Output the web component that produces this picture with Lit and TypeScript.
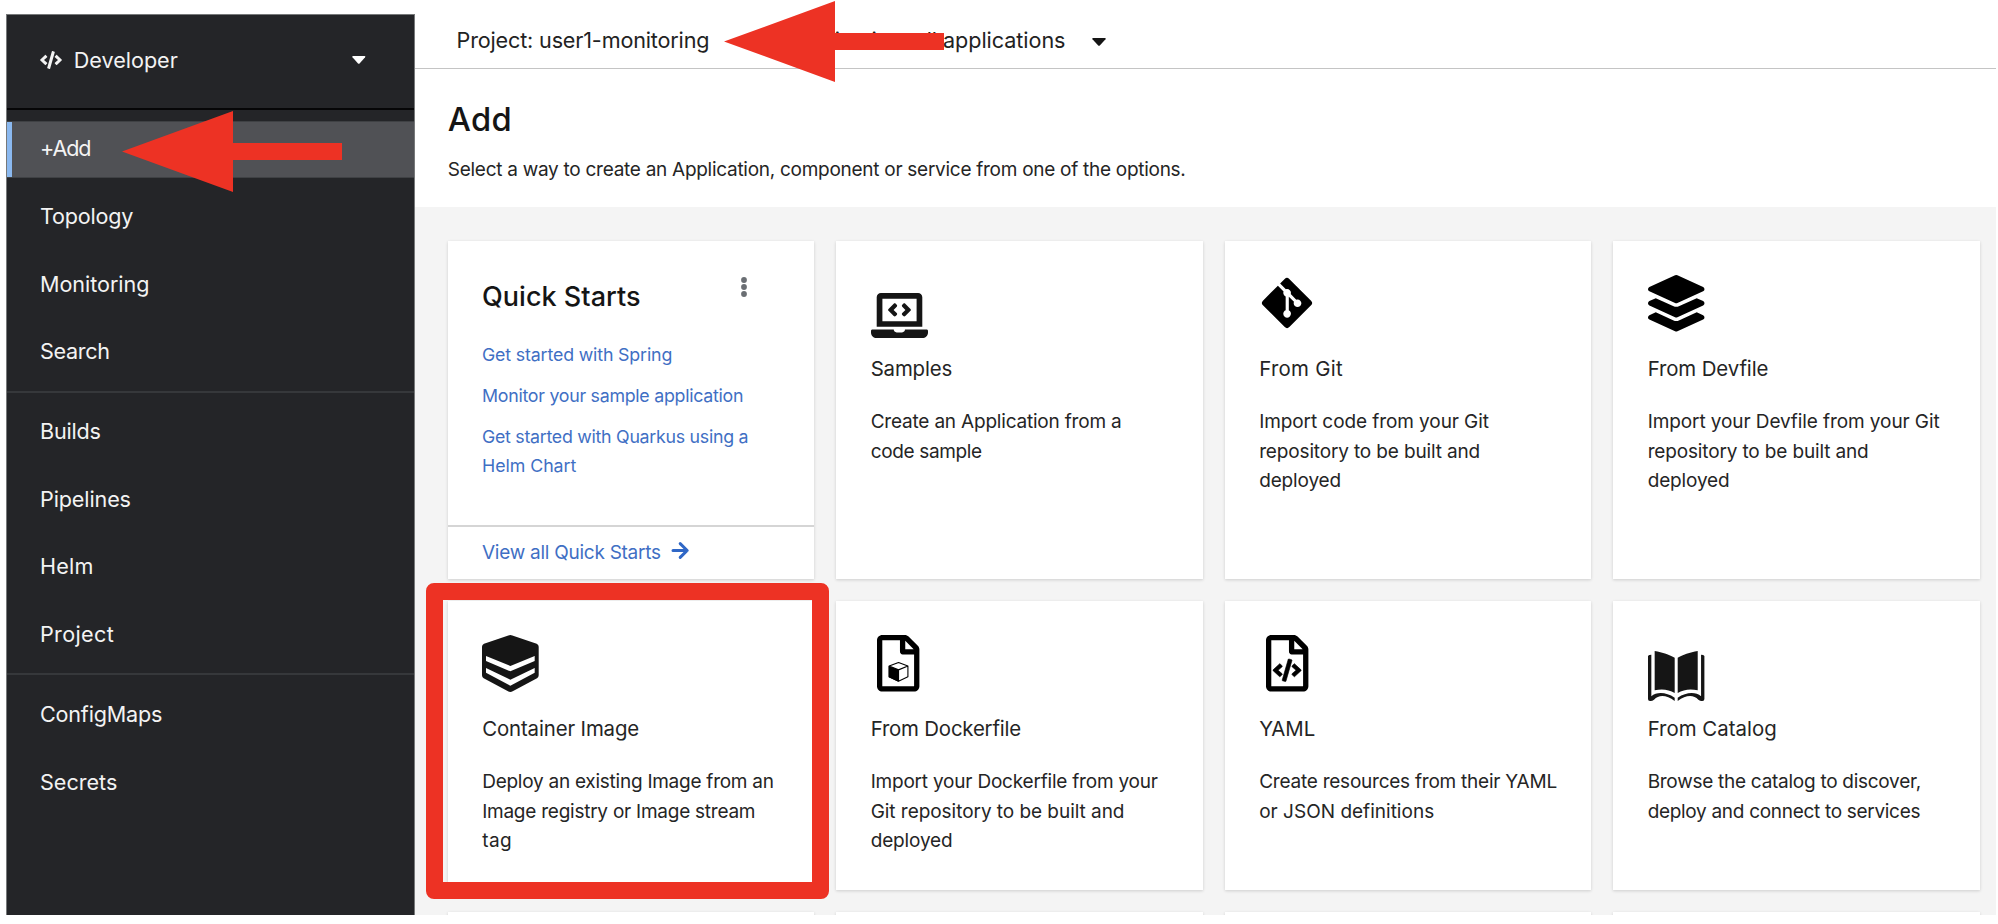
import { LitElement, html, svg, css, nothing } from "lit";
import { customElement, property } from "lit/decorators.js";
import { classMap } from "lit/directives/class-map.js";

type Line = [text: string, width: number];
interface Tile { icon: string; title: Line; lines: Line[]; }

const FONT = '"Inter"';
const ruler = document.createElement("canvas").getContext("2d")!;

/** Letter spacing that makes a line of text fill the given width. */
function tracking([text, width]: Line, size: number, weight = 400): number {
  ruler.font = `${weight} ${size}px ${FONT}`;
  return (width - ruler.measureText(text).width) / (text.length - 1);
}
function fit(line: Line, size: number, weight = 400) {
  return html`<span style="letter-spacing:${tracking(line, size, weight).toFixed(3)}px">${line[0]}</span>`;
}

const CODE = "M278.9 511.5l-61-17.7c-6.4-1.8-10-8.5-8.2-14.9L346.2 8.7c1.8-6.4 8.5-10 14.9-8.2l61 17.7c6.4 1.8 10 8.5 8.2 14.9L293.8 503.3c-1.9 6.4-8.5 10.1-14.9 8.2zm-114-112.2l43.5-46.4c4.6-4.9 4.3-12.7-.8-17.2L117 256l90.6-79.7c5.1-4.5 5.5-12.3.8-17.2l-43.5-46.4c-4.5-4.8-12.1-5.1-17-.5L3.8 247.2c-5.1 4.7-5.1 12.8 0 17.5l144.1 135.1c4.9 4.6 12.5 4.4 17-.5zm327.2.6l144.1-135.1c5.1-4.7 5.1-12.8 0-17.5L492.1 112.1c-4.8-4.5-12.4-4.3-17 .5L431.6 159c-4.6 4.9-4.3 12.7.8 17.2L523 256l-90.6 79.7c-5.1 4.5-5.5 12.3-.8 17.2l43.5 46.4c4.5 4.9 12.1 5.1 17 .6z";
const FILE = "M369.9 97.9L286 14C277 5 264.8-.1 252.1-.1H48C21.5 0 0 21.5 0 48v416c0 26.5 21.5 48 48 48h288c26.5 0 48-21.5 48-48V131.9c0-12.7-5.1-25-14.1-34zM332.1 128H256V51.9l76.1 76.1zM48 464V48h160v104c0 13.3 10.7 24 24 24h104v288H48z";
const BOOK = "M42 32C65 36 88 44 102 52V158C85 148 65 144 42 150ZM22 47Q24 43 32 43V168C48 154 76 155 102 172V182C78 164 55 162 40 178Q34 183 28 182Q22 182 22 176Z";

const ICONS: Record<string, { box: string; body: unknown }> = {
  laptop: { box: "0 0 640 512", body: svg`<path d="M255.03 261.65c6.25 6.25 16.38 6.25 22.63 0l11.31-11.31c6.25-6.25 6.25-16.38 0-22.63L253.25 192l35.71-35.72c6.25-6.25 6.25-16.38 0-22.63l-11.31-11.31c-6.25-6.25-16.38-6.25-22.63 0l-58.34 58.34c-6.25 6.25-6.25 16.38 0 22.63l58.35 58.34zm96.01-11.3l11.31 11.31c6.25 6.25 16.38 6.25 22.63 0l58.34-58.34c6.25-6.25 6.25-16.38 0-22.63l-58.34-58.34c-6.25-6.25-16.38-6.25-22.63 0l-11.31 11.31c-6.25 6.25-6.25 16.38 0 22.63L386.75 192l-35.71 35.72c-6.25 6.25-6.25 16.38 0 22.63zM624 416H381.54c-.74 19.81-14.71 32-32.74 32H288c-18.69 0-33.02-17.47-32.77-32H16c-8.8 0-16 7.2-16 16v16c0 35.2 28.8 64 64 64h512c35.2 0 64-28.8 64-64v-16c0-8.8-7.2-16-16-16zM576 48c0-26.4-21.6-48-48-48H112C85.6 0 64 21.6 64 48v336h512V48zm-64 272H128V64h384v256z"/>` },
  git: { box: "0 32 448 448", body: svg`<path d="M439.55 236.05L244 40.45a28.87 28.87 0 0 0-40.81 0l-40.66 40.63 51.52 51.52c27.06-9.14 52.68 16.77 43.39 43.68l49.66 49.66c34.23-11.8 61.18 31 35.47 56.69-26.49 26.49-70.21-2.87-56-37.34L240.22 199v121.85c25.3 12.54 22.26 41.85 9.08 55a34.34 34.34 0 0 1-48.55 0c-17.57-17.6-11.07-46.91 11.25-56v-123c-20.8-8.51-24.6-30.74-18.64-45L142.57 101 8.45 235.14a28.86 28.86 0 0 0 0 40.81l195.61 195.6a28.86 28.86 0 0 0 40.8 0l194.69-194.69a28.86 28.86 0 0 0 0-40.81z"/>` },
  layers: { box: "0 0 512 512", body: svg`<path d="M12.41 148.02l232.94 105.67c6.8 3.09 14.49 3.09 21.29 0l232.94-105.67c16.55-7.51 16.55-32.52 0-40.03L266.65 2.31a25.607 25.607 0 0 0-21.29 0L12.41 107.98c-16.55 7.51-16.55 32.53 0 40.04zm487.18 88.28l-58.09-26.33-161.64 73.27c-7.56 3.43-15.59 5.17-23.86 5.17s-16.29-1.74-23.86-5.17L70.51 209.97l-58.1 26.33c-16.55 7.5-16.55 32.5 0 40l232.94 105.59c6.8 3.08 14.49 3.08 21.29 0L499.59 276.3c16.55-7.5 16.55-32.5 0-40zm0 127.8l-57.87-26.23-161.86 73.37c-7.56 3.43-15.59 5.17-23.86 5.17s-16.29-1.74-23.86-5.17L70.29 337.87 12.41 364.1c-16.55 7.5-16.55 32.5 0 40l232.94 105.59c6.8 3.08 14.49 3.08 21.29 0L499.59 404.1c16.55-7.5 16.55-32.5 0-40z"/>` },
  container: { box: "18 18 170 171", body: svg`<path fill-rule="evenodd" d="M97 19.5Q103 17 109 19.5L182 44Q188 47 188 53V139Q188 145 183 148L110 187Q103 191 96 187L23 148Q18 145 18 139V53Q18 47 24 44ZM30 81V96L103 127L176 96V81L103 111ZM30 117V131L103 170L176 131V117L103 152Z"/>` },
  docker: { box: "0 0 384 512", body: svg`<path d=${FILE}/><path d="M106 280L195 316V424L106 382Z"/><path d="M195 249L280 281V379L195 419L110 379V281ZM195 316L280 281M195 316L110 281M195 316V419" fill="none" stroke="currentColor" stroke-width="10" stroke-linejoin="round"/>` },
  yaml: { box: "0 0 384 512", body: svg`<path d=${FILE}/><path transform="translate(63 217) scale(.4)" d=${CODE} stroke="currentColor" stroke-width="14"/>` },
  book: { box: "22 32 169 150", body: svg`<path d=${BOOK}/><path transform="translate(213 0) scale(-1 1)" d=${BOOK}/>` },
  code: { box: "0 0 640 512", body: svg`<path d=${CODE}/>` },
  caret: { box: "0 0 14 8", body: svg`<path d="M1 0H13Q14.4 .2 13.5 1.2L7.8 7.4Q7 8.2 6.2 7.4L.5 1.2Q-.4 .2 1 0Z"/>` },
  kebab: { box: "0 0 6 20", body: svg`<circle cx="3" cy="3" r="2.9"/><circle cx="3" cy="10" r="2.9"/><circle cx="3" cy="17" r="2.9"/>` },
  arrow: { box: "0 0 17 17", body: svg`<path d="M1 8.5H15M8.2 1.6L15.2 8.5L8.2 15.4" fill="none" stroke="currentColor" stroke-width="3" stroke-linecap="round" stroke-linejoin="round"/>` },
};

function icon(name: string) {
  const { box, body } = ICONS[name];
  return html`<svg class="icon ${name}" viewBox=${box} preserveAspectRatio="none" fill="currentColor" aria-hidden="true">${body}</svg>`;
}

const NAV: Line[][] = [
  [["+Add", 51.5], ["Topology", 93.5], ["Monitoring", 109.5], ["Search", 70]],
  [["Builds", 61], ["Pipelines", 91], ["Helm", 53.5], ["Project", 73.7]],
  [["ConfigMaps", 122.3], ["Secrets", 77.3]],
];

const LINKS: Line[][] = [
  [["Get started with Spring", 190.3]],
  [["Monitor your sample application", 261.5]],
  [["Get started with Quarkus using a", 266.5], ["Helm Chart", 94.3]],
];

const TILES: Tile[] = [
  { icon: "laptop", title: ["Samples", 81.5], lines: [["Create an Application from a", 251], ["code sample", 111.5]] },
  { icon: "git", title: ["From Git", 83.5], lines: [["Import code from your Git", 229.8], ["repository to be built and", 221], ["deployed", 82]] },
  { icon: "layers", title: ["From Devfile", 120.8], lines: [["Import your Devfile from your Git", 292], ["repository to be built and", 221], ["deployed", 82]] },
  { icon: "container", title: ["Container Image", 157], lines: [["Deploy an existing Image from an", 291.8], ["Image registry or Image stream", 273.3], ["tag", 29.5]] },
  { icon: "docker", title: ["From Dockerfile", 150.5], lines: [["Import your Dockerfile from your", 287.3], ["Git repository to be built and", 253.8], ["deployed", 82]] },
  { icon: "yaml", title: ["YAML", 56], lines: [["Create resources from their YAML", 298], ["or JSON definitions", 175]] },
  { icon: "book", title: ["From Catalog", 129], lines: [["Browse the catalog to discover,", 273.5], ["deploy and connect to services", 272.8]] },
];

const shared = css`
  * { box-sizing: border-box; }
  .icon { display: block; flex: none; overflow: visible; }
`;

@customElement("dev-nav")
export class DevNav extends LitElement {
  static styles = [shared, css`
    :host { display: block; flex: none; width: 409px; background: #242528; color: #f3f3f3; font: 21.6px "Inter", sans-serif;
      border: 1px solid #77797a; border-bottom: 0; white-space: nowrap; }
    .switch { display: flex; align-items: center; height: 95px; padding: 0 48.5px 3px 33.3px; border-bottom: 2px solid #060607; line-height: 30px; }
    .switch .name { flex: 1; padding: 0 0 1px 11.5px; }
    .code { width: 22px; height: 18px; margin-bottom: 1px; }
    .caret { width: 13.6px; height: 8px; color: #fff; }
    .group { display: flex; flex-direction: column; gap: 10.5px; padding: 10.8px 0 10.4px; }
    .group + .group { border-top: 2px solid #36383b; }
    .item { height: 57px; line-height: 56px; padding-left: 33px; }
    .item.active { background: #505155; border: solid #3f4144; border-width: 1px 0; line-height: 53px; box-shadow: inset 5px 0 #8bb9f0; }
  `];
  render() {
    return html`
      <div class="switch">${icon("code")}<span class="name">${fit(["Developer", 104], 21.6)}</span>${icon("caret")}</div>
      ${NAV.map((g, i) => html`<div class="group">${g.map((l, j) => html`<div class=${classMap({ item: true, active: i + j === 0 })}>${fit(l, 21.6)}</div>`)}</div>`)}`;
  }
}

const cardStyles = css`
  :host { display: block; background: #fff; box-shadow: 0 1px 3px rgba(3, 3, 3, .16); color: #252525;
    font: 19px/29.6px "Inter", sans-serif; white-space: nowrap; }
`;

@customElement("quick-starts")
export class QuickStarts extends LitElement {
  static styles = [shared, cardStyles, css`
    :host { display: flex; flex-direction: column; }
    .head { display: flex; justify-content: space-between; padding: 36.8px 67.3px 0 34px; }
    .title { font-size: 27px; line-height: 37px; font-weight: 500; color: #151515; }
    .kebab { width: 6px; height: 20px; margin-top: -.5px; color: #6a6e73; }
    .links { flex: 1; display: flex; flex-direction: column; gap: 11.1px; padding: 25.4px 0 0 34px; color: #3f6fc4; font-size: 17.8px; }
    .line { display: block; }
    .foot { display: flex; gap: 11.5px; height: 54px; padding: 10.8px 0 0 34px; border-top: 2px solid #d5d5d5; color: #3f6fc4; line-height: 30px; }
    .arrow { width: 17px; height: 17px; margin-top: 4.3px; color: #2f67c6; }
  `];
  render() {
    return html`
      <div class="head"><div class="title">${fit(["Quick Starts", 158.5], 27, 500)}</div>${icon("kebab")}</div>
      <div class="links">${LINKS.map(l => html`<a>${l.map(x => html`<span class="line">${fit(x, 17.8)}</span>`)}</a>`)}</div>
      <div class="foot">${fit(["View all Quick Starts", 179], 19)}${icon("arrow")}</div>`;
  }
}

@customElement("add-card")
export class AddCard extends LitElement {
  @property({ attribute: false }) tile?: Tile;
  static styles = [shared, cardStyles, css`
    :host { padding: 33.6px 0 0 34.2px; }
    .slot { display: flow-root; height: 79.9px; color: #000; }
    .laptop { width: 57px; height: 45px; margin-top: 18.5px; color: #151515; }
    .git { width: 50px; height: 50px; margin: 3.2px 0 0 3px; }
    .layers { width: 56.5px; height: 56.5px; margin-left: .2px; }
    .container { width: 56.7px; height: 57px; color: #151515; }
    .docker, .yaml { width: 42.4px; height: 56.5px; margin-left: 6.8px; }
    .book { width: 56.4px; height: 50px; margin: 16.2px 0 0 .2px; color: #151515; }
    .title { font-size: 20.4px; line-height: 30px; margin-bottom: 22.8px; }
  `];
  render() {
    const t = this.tile;
    if (!t) return nothing;
    return html`<div class="slot">${icon(t.icon)}</div>
      <div class="title">${fit(t.title, 20.4)}</div>
      ${t.lines.map(l => html`<div>${fit(l, 19)}</div>`)}`;
  }
}

@customElement("app-root")
export class AppRoot extends LitElement {
  static styles = [shared, css`
    :host { display: block; position: relative; width: 1998px; height: 924px; overflow: hidden; background: #fff;
      font: 19px "Inter", sans-serif; color: #252525; }
    .page { display: flex; width: 1996px; height: 914.7px; padding-left: 6px; overflow: hidden; }
    dev-nav { margin-top: 14px; }
    main { flex: 1; display: flex; flex-direction: column; white-space: nowrap; }
    .bar { flex: none; display: flex; height: 69px; padding: 25px 0 0 41.5px; border-bottom: 1px solid #c4c4c4; font-size: 21.6px; line-height: 30px; color: #222; }
    .bar .project { width: 332px; }
    .bar .app { width: 303px; }
    .bar .caret { width: 14px; height: 8px; margin-top: 12.5px; color: #151515; }
    header { flex: none; height: 138px; padding: 28px 0 0 32.8px; }
    h1 { margin: 0 0 14px; font-size: 32.7px; line-height: 44px; font-weight: 500; color: #151515; }
    p { margin: 0; line-height: 30px; }
    .grid { flex: 1 0 0; min-height: 0; display: grid; grid-template-columns: repeat(4, 366.2px); grid-template-rows: 338px 289px 289px; gap: 22px 22.3px;
      padding: 34px 0 0 33px; background: #f4f4f4; }
    .mark { position: absolute; fill: #ed3224; }
    .mark-add { left: 122px; top: 111px; width: 220px; height: 81px; }
    .mark-project { left: 724px; top: 1px; width: 220px; height: 81px; }
    .frame { position: absolute; left: 426.4px; top: 583.4px; width: 402.2px; height: 315.2px; border: 17px solid #ed3224; border-radius: 8px; }
  `];
  render() {
    const pointer = svg`<path d="M0 40.5L111 0V32H220V49H111V81Z"/>`;
    return html`
      <div class="page">
        <dev-nav></dev-nav>
        <main>
          <div class="bar">
            <span class="project">${fit(["Project: user1-monitoring", 253], 21.6)}</span>
            <span class="app">${fit(["Application: all applications", 277], 21.6)}</span>
            ${icon("caret")}
          </div>
          <header>
            <h1>${fit(["Add", 64], 32.7, 500)}</h1>
            <p>${fit(["Select a way to create an Application, component or service from one of the options.", 738], 19)}</p>
          </header>
          <div class="grid">
            <quick-starts></quick-starts>
            ${TILES.map(t => html`<add-card .tile=${t}></add-card>`)}
            ${[0, 1, 2, 3].map(() => html`<add-card></add-card>`)}
          </div>
        </main>
      </div>
      <svg class="mark mark-add" viewBox="0 0 220 81">${pointer}</svg>
      <svg class="mark mark-project" viewBox="0 0 220 81">${pointer}</svg>
      <div class="frame"></div>`;
  }
}
